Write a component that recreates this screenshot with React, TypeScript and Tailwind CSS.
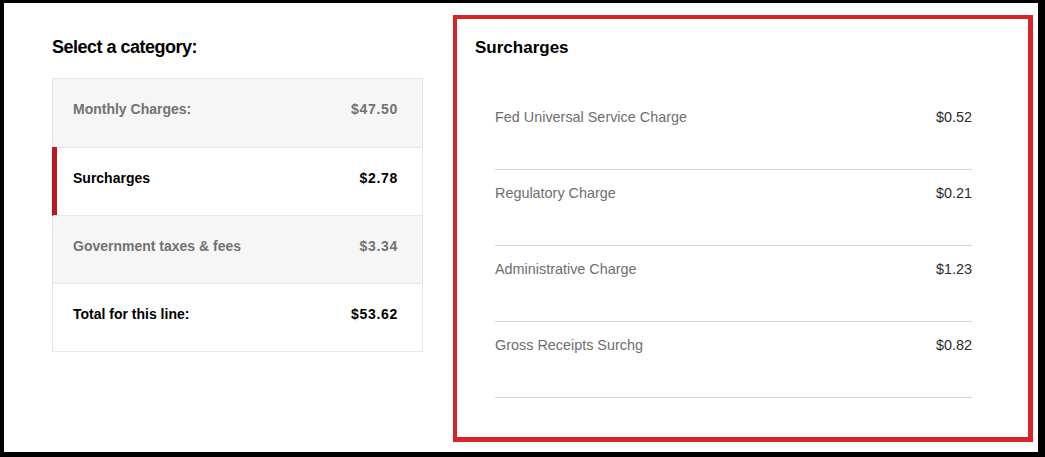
const categories = [
  { label: 'Monthly Charges:', amount: '$47.50', muted: true },
  { label: 'Surcharges', amount: '$2.78', selected: true },
  { label: 'Government taxes & fees', amount: '$3.34', muted: true },
  { label: 'Total for this line:', amount: '$53.62' },
]

const surcharges = [
  { label: 'Fed Universal Service Charge', amount: '$0.52' },
  { label: 'Regulatory Charge', amount: '$0.21' },
  { label: 'Administrative Charge', amount: '$1.23' },
  { label: 'Gross Receipts Surchg', amount: '$0.82' },
]

export default function App() {
  return (
    <div
      className="h-[457px] w-[1045px] bg-black pt-[3px] pl-[4px] pr-[7px] pb-[5px]"
      style={{ fontFamily: '"Liberation Sans", Arial, sans-serif' }}
    >
      <div className="flex h-full bg-white pl-[48px]">
        {/* Category picker */}
        <div className="w-[371px] pt-[33px]">
          <h2 className="text-[18px] leading-[22px] font-bold tracking-[-0.5px] text-black mb-[20px]">
            Select a category:
          </h2>
          <div className="border border-[#e6e6e6]">
            {categories.map((c, i) => (
              <div
                key={c.label}
                className={
                  'relative flex h-[68px] items-center justify-between pl-[20px] pr-[24px] pb-[7px] text-[14px] font-bold ' +
                  (i > 0 ? 'border-t border-[#e6e6e6] ' : '') +
                  (c.muted ? 'bg-[#f6f6f6] text-[#727272]' : 'bg-white text-black')
                }
              >
                {c.selected && (
                  <span className="absolute -left-px -top-px -bottom-px w-[5px] bg-[#c0151f]" />
                )}
                <span>{c.label}</span>
                <span className="tracking-[0.7px]">{c.amount}</span>
              </div>
            ))}
          </div>
        </div>

        {/* Selected detail */}
        <div className="ml-[30px] mt-[12px] h-[427px] w-[580px] border-4 border-r-[5px] border-b-[5px] border-[#d8232a] pl-[18px] pr-[56px]">
          <h3 className="pt-[19px] text-[17px] leading-[20px] font-bold text-black mb-[36px]">
            Surcharges
          </h3>
          <div className="pl-[20px]">
            {surcharges.map((s) => (
              <div
                key={s.label}
                className="flex h-[76px] justify-between border-b border-[#d3d3d3] pt-[15px] text-[14.4px] leading-[16px]"
              >
                <span className="text-[#6e6e6e]">{s.label}</span>
                <span className="text-[#2b2b2b]">{s.amount}</span>
              </div>
            ))}
          </div>
        </div>
      </div>
    </div>
  )
}
